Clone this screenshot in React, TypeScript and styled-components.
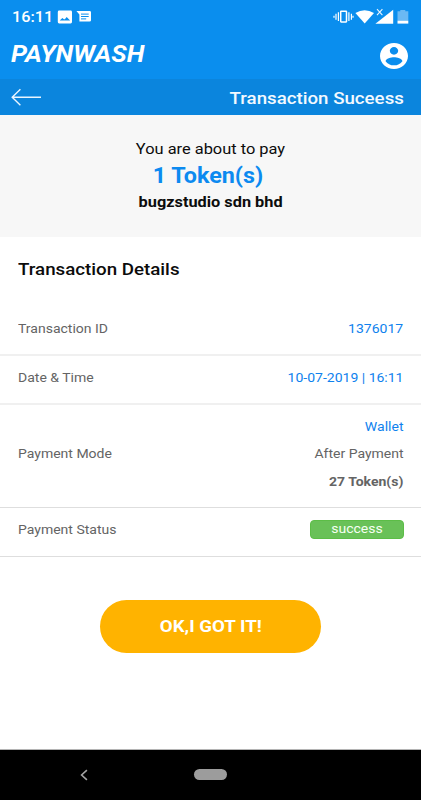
import React from "react";
import styled, { createGlobalStyle } from "styled-components";

const Global = createGlobalStyle`
  * { box-sizing: border-box; }
  html, body { margin: 0; padding: 0; background: #fff; }
  body { font-family: Roboto, sans-serif; color: #0c0c0c; overflow: hidden; }
`;

const Screen = styled.div`
  width: 421px;
  height: 800px;
  display: flex;
  flex-direction: column;
  background: #fff;
`;

/* Roboto set slightly wide; the stretch grows away from the aligned edge. */
const Label = styled.span<{
  $size: number;
  $stretch?: number;
  $weight?: number;
  $color?: string;
  $from?: "left" | "center" | "right";
  $italic?: boolean;
}>`
  display: inline-block;
  white-space: nowrap;
  font-size: ${(p) => p.$size}px;
  font-weight: ${(p) => p.$weight ?? 400};
  font-style: ${(p) => (p.$italic ? "italic" : "normal")};
  color: ${(p) => p.$color ?? "inherit"};
  transform: scaleX(${(p) => p.$stretch ?? 1.12});
  transform-origin: ${(p) => p.$from ?? "left"} center;
`;

const StatusBar = styled.div`
  height: 33px;
  padding: 1px 12px 0 12px;
  display: flex;
  align-items: center;
  justify-content: space-between;
  color: #fff;
  background: #0a8eee;
`;

const StatusGroup = styled.div`
  display: flex;
  align-items: center;
`;

const Clock = styled.div`
  width: 45px;
  line-height: 20px;
`;

const BrandBar = styled.header`
  height: 46px;
  padding: 0 13px 0 11px;
  display: flex;
  align-items: center;
  justify-content: space-between;
  color: #fff;
  background: #0a8eee;
`;

const Brand = styled.div`
  line-height: 36px;
  padding-bottom: 1px;
`;

const TitleBar = styled.div`
  height: 36px;
  padding: 0 17px 0 11px;
  display: flex;
  align-items: center;
  justify-content: space-between;
  color: #f3f9ff;
  background: #0b85dd;
  line-height: 34px;
`;

const Title = styled.div`
  padding-top: 3px;
`;

const Summary = styled.section`
  height: 122px;
  padding-top: 22px;
  display: flex;
  flex-direction: column;
  align-items: center;
  background: #f7f7f7;
`;

const SummaryLine = styled.div<{ $height: number; $nudge?: number }>`
  height: ${(p) => p.$height}px;
  line-height: ${(p) => p.$height}px;
  padding-right: ${(p) => p.$nudge ?? 0}px;
`;

const Heading = styled.h2`
  margin: 0;
  height: 65px;
  padding-left: 17.5px;
  line-height: 60px;
  font-weight: 500;
`;

const Row = styled.div<{ $height: number; $soft?: boolean; $top?: number; $bottom?: number }>`
  height: ${(p) => p.$height}px;
  padding: ${(p) => p.$top ?? 0}px 17.5px ${(p) => p.$bottom ?? 0}px 17.5px;
  display: flex;
  align-items: center;
  justify-content: space-between;
  line-height: 27.2px;
  color: #646464;
  border-bottom: ${(p) => (p.$soft ? "2px solid #f0f0f0" : "1px solid #dedede")};
`;

const Values = styled.div`
  display: flex;
  flex-direction: column;
  align-items: flex-end;
`;

const Badge = styled.div`
  width: 94px;
  height: 19px;
  margin-bottom: 2px;
  line-height: 18px;
  border: 1px solid #5cbd47;
  border-radius: 4px;
  background: #69c158;
  color: #f5fff2;
  display: flex;
  align-items: center;
  justify-content: center;
`;

const Action = styled.div`
  flex: 1;
  padding-top: 43px;
  display: flex;
  justify-content: center;
  align-items: flex-start;
  border-bottom: 1px solid #b4b4b4;
`;

const ConfirmButton = styled.button`
  width: 221px;
  height: 53px;
  padding: 0;
  border: 0;
  border-radius: 27px;
  background: #ffb300;
  color: #fff;
  font-family: inherit;
`;

const NavBar = styled.nav`
  height: 50px;
  padding-left: 80px;
  display: flex;
  align-items: center;
  background: #000;
`;

const HomePill = styled.div`
  width: 33px;
  height: 11px;
  margin-left: 106px;
  margin-bottom: 1px;
  border-radius: 6px;
  background: #9c9c9c;
`;

const BLUE = "#0f82ee";

const NotificationIcons = () => (
  <svg width="35" height="16" viewBox="0 0 35 16">
    <rect x="0.8" y="1.6" width="14.2" height="12.8" rx="1.4" fill="#fff" />
    <path d="M2.7 11.6 5.4 9l1.8 1.4 1.3-1 1.2-1.3 3.4 3.5z" fill="#0a8eee" />
    <path d="M19.4 2h13.2q1.4 0 1.4 1.3v8q0 1.3-1.4 1.3H22.4V5.6z" fill="#fff" />
    <path d="M24 5.1h7.7M24 7.5h7.7M24 9.9h5.2" stroke="#0a8eee" strokeWidth="1" />
  </svg>
);

const SystemIcons = () => (
  <svg width="77" height="18" viewBox="332 7.5 77 18">
    <rect x="340.7" y="10.8" width="5.8" height="10.6" rx="0.4" fill="none" stroke="#fff" strokeWidth="1.5" />
    <path d="M338.4 11.8v8.8M336 13.2v6M348.9 11.8v8.8M351.4 13.2v6M334 15.2v2M353 15.2v2" stroke="#fff" strokeWidth="1.2" />
    <path d="M355.4 12.6Q364.6 6.8 374 12.6L364.7 23z" fill="#fff" />
    <path d="M393.2 9.2V23.2H375.4z" fill="#fff" />
    <path d="M375.6 7.2h7.8v6.2l-5 3.6-2.8-1z" fill="#0a8eee" />
    <path d="M377 8.7l5.4 5.9M382.4 8.7l-5.4 5.9" stroke="#e8f4ff" strokeWidth="1.1" />
    <path d="M400.3 9.4h5v1.3h3V20.4h-10.8V10.7h2.8z" fill="#6bb9f4" />
    <path d="M397.5 20.3h10.8v2.8h-10.8z" fill="#fff" />
  </svg>
);

const AccountIcon = () => (
  <svg width="28" height="26" viewBox="2 2 20 20" preserveAspectRatio="none">
    <path
      fill="#fff"
      d="M12 2C6.48 2 2 6.48 2 12s4.48 10 10 10 10-4.48 10-10S17.52 2 12 2zm0 3c1.66 0 3 1.34 3 3s-1.34 3-3 3-3-1.34-3-3 1.34-3 3-3zm0 14.2c-2.5 0-4.71-1.28-6-3.22.03-1.99 4-3.08 6-3.08 1.99 0 5.97 1.09 6 3.08-1.29 1.94-3.5 3.22-6 3.22z"
    />
  </svg>
);

const BackArrow = () => (
  <svg width="31" height="18" viewBox="0 0 31 18">
    <path d="M30 9.2H1.4M9.4 1.2 1.2 9.2l8.2 8" fill="none" stroke="#e9f5ff" strokeWidth="1.4" />
  </svg>
);

const NavBack = () => (
  <svg width="8" height="12" viewBox="0 0 8 12">
    <path d="M6.9 1.2 1.6 6l5.3 4.8" fill="none" stroke="#a2a2a2" strokeWidth="1.6" />
  </svg>
);

export default function App() {
  return (
    <Screen>
      <Global />
      <StatusBar>
        <StatusGroup>
          <Clock>
            <Label $size={14.8} $weight={500} $stretch={1.1}>16:11</Label>
          </Clock>
          <NotificationIcons />
        </StatusGroup>
        <SystemIcons />
      </StatusBar>
      <BrandBar>
        <Brand>
          <Label $size={23.5} $weight={700} $italic $stretch={1.095}>PAYNWASH</Label>
        </Brand>
        <AccountIcon />
      </BrandBar>
      <TitleBar>
        <BackArrow />
        <Title>
          <Label $size={16.4} $weight={500} $stretch={1.14} $from="right">Transaction Suceess</Label>
        </Title>
      </TitleBar>
      <Summary>
        <SummaryLine $height={24}>
          <Label $size={14.4} $stretch={1.14} $from="center">You are about to pay</Label>
        </SummaryLine>
        <SummaryLine $height={30} $nudge={6}>
          <Label $size={21.5} $weight={700} $stretch={1.085} $color="#0c8af0" $from="center">1 Token(s)</Label>
        </SummaryLine>
        <SummaryLine $height={21}>
          <Label $size={14.2} $weight={700} $stretch={1.15} $from="center">bugzstudio sdn bhd</Label>
        </SummaryLine>
      </Summary>
      <Heading>
        <Label $size={16.3} $weight={500} $stretch={1.15}>Transaction Details</Label>
      </Heading>
      <Row $height={54} $soft $top={2}>
        <Label $size={12.5}>Transaction ID</Label>
        <Label $size={12.5} $color={BLUE} $from="right">1376017</Label>
      </Row>
      <Row $height={49} $soft $bottom={4}>
        <Label $size={12.5}>Date &amp; Time</Label>
        <Label $size={12.5} $color={BLUE} $from="right">10-07-2019 | 16:11</Label>
      </Row>
      <Row $height={103} $bottom={4}>
        <Label $size={12.5}>Payment Mode</Label>
        <Values>
          <Label $size={12.5} $color={BLUE} $from="right">Wallet</Label>
          <Label $size={12.5} $from="right">After Payment</Label>
          <Label $size={12.5} $weight={700} $from="right">27 Token(s)</Label>
        </Values>
      </Row>
      <Row $height={49} $bottom={4}>
        <Label $size={12.5}>Payment Status</Label>
        <Badge>
          <Label $size={12.5} $from="center">success</Label>
        </Badge>
      </Row>
      <Action>
        <ConfirmButton>
          <Label $size={15.7} $weight={700} $stretch={1.19} $from="center">OK,I GOT IT!</Label>
        </ConfirmButton>
      </Action>
      <NavBar>
        <NavBack />
        <HomePill />
      </NavBar>
    </Screen>
  );
}
